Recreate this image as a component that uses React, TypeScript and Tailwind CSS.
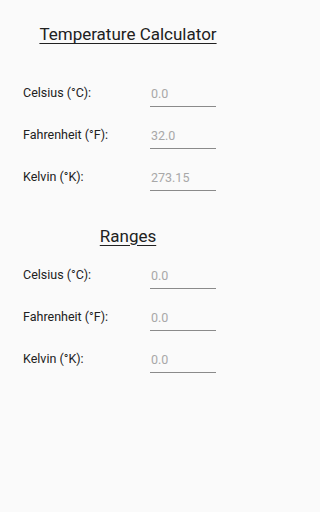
const rows1 = [
  { label: 'Celsius (°C):', value: '0.0' },
  { label: 'Fahrenheit (°F):', value: '32.0' },
  { label: 'Kelvin (°K):', value: '273.15' },
]

const rows2 = [
  { label: 'Celsius (°C):', value: '0.0' },
  { label: 'Fahrenheit (°F):', value: '0.0' },
  { label: 'Kelvin (°K):', value: '0.0' },
]

function Row({ label, value }: { label: string; value: string }) {
  return (
    <div className="flex items-end h-[42px]">
      <div className="w-[127px] pb-[4px] text-[12.5px] text-[#212121]">{label}</div>
      <div className="w-[66px] border-b border-[#8a8a8a] pb-[2px] text-[12.5px] text-[#a8a8a8] pl-[1px]">
        {value}
      </div>
    </div>
  )
}

export default function App() {
  return (
    <div className="w-full min-h-screen bg-[#fafafa]" style={{ fontFamily: 'Roboto, sans-serif' }}>
      <div className="w-[256px]">
        <div className="pt-[22px] text-center">
          <span className="text-[17px] text-[#212121] underline underline-offset-[3px] decoration-[1px]">
            Temperature Calculator
          </span>
        </div>
        <div className="pl-[23px] pt-[17px]">
          {rows1.map((r) => (
            <Row key={r.label} {...r} />
          ))}
        </div>
        <div className="pt-[35px] text-center leading-[20px]">
          <span className="text-[17px] text-[#212121] underline underline-offset-[3px] decoration-[1px]">
            Ranges
          </span>
        </div>
        <div className="pl-[23px]">
          {rows2.map((r) => (
            <Row key={r.label} {...r} />
          ))}
        </div>
      </div>
    </div>
  )
}
